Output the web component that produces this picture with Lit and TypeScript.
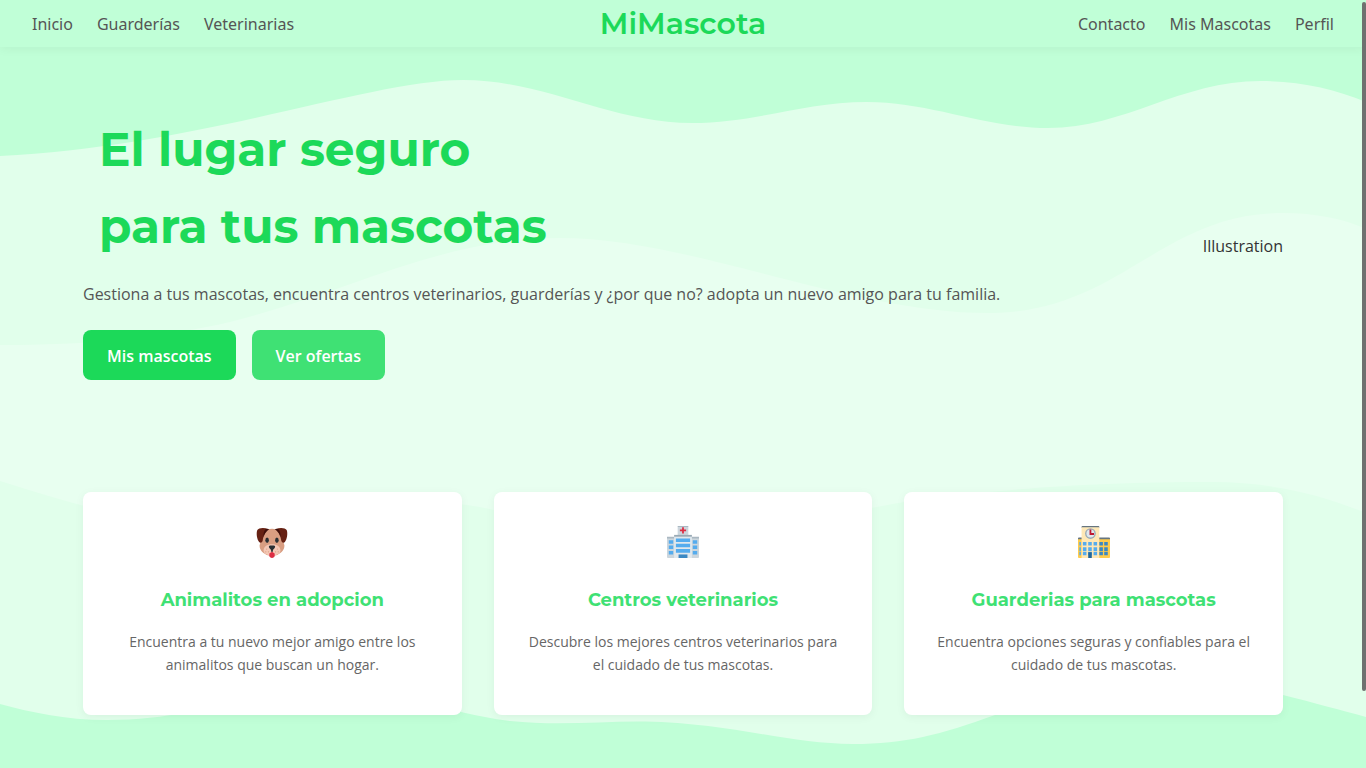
import { LitElement, html, css, svg } from "lit";
import { customElement } from "lit/decorators.js";

const dogIcon = svg`
  <path fill="#d99e82" d="M18 3c7 0 11 4 11.500 10l2.500 9c0 6-5 9-8 10.500L18 34l-6-1.500C9 31 4 28 4 22l2.500-9C7 7 11 3 18 3z"/>
  <path fill="#662113" d="M14 3.500C9 1.500 3 2 1.500 4.500 0 8 1 15 3.500 18c1.500 1.500 3.500.5 4-1.500C8.500 11.500 9.500 7 14 3.500zM22 3.500c5-2 11-1.500 12.500 1C36 8 35 15 32.500 18c-1.500 1.500-3.500.5-4-1.500C27.500 11.500 26.500 7 22 3.500z"/>
  <path fill="#3f0f0a" d="M11 3.500l4 0C11 6.500 9.500 9 8.500 13 8 9 9 5.500 11 3.500zM25 3.500l-4 0c4 3 5.500 5.500 6.500 9.500.5-4-.5-7.500-2.500-9.500z"/>
  <ellipse cx="12.500" cy="16" rx="2" ry="3" fill="#292f33"/>
  <ellipse cx="23.500" cy="16" rx="2" ry="3" fill="#292f33"/>
  <path fill="#f4c7b5" d="M18 20.500c6 0 9.500 3 9.500 7 0 3.500-4 5.500-9.500 5.500s-9.500-2-9.500-5.500c0-4 3.500-7 9.500-7z"/>
  <g fill="#d99e82"><circle cx="12" cy="26" r=".7"/><circle cx="14" cy="29" r=".7"/><circle cx="11" cy="29" r=".7"/><circle cx="24" cy="26" r=".7"/><circle cx="22" cy="29" r=".7"/><circle cx="25" cy="29" r=".7"/></g>
  <path fill="#dd2e44" d="M15 31l3-2 3 2v2.500C21 35 19.500 36 18 36s-3-1-3-2.500z"/>
  <path fill="#292f33" d="M16 22h4c1.500 0 2 1.500 1 2.700L19 27v1.500c0 1-2 1-2 0V27l-2-2.300c-1-1.200-.5-2.700 1-2.700z"/>`;

const sideWindows = [16, 22, 28];
const hospitalIcon = svg`
  <path fill="#ccd6dd" d="M0 13h36v22a1 1 0 0 1-1 1H1a1 1 0 0 1-1-1zM12 1h12v11H12z"/>
  <path fill="#aab8c2" d="M0 12h9v2H0zM27 12h9v2h-9zM12 0h12v1H12z"/>
  <path fill="#e1e8ed" d="M8 11h20v25H8z"/>
  <path fill="#99aab5" d="M8 10h20v2H8z"/>
  <path fill="#dd2e44" d="M17 1.500h2V4h2.500v2H19v2.500h-2V6h-2.500V4H17z"/>
  ${sideWindows.map((y) => svg`<path fill="#55acee" d="M2 ${y}h5v4H2zM29 ${y}h5v4h-5zM10 ${y - 2}h16v4H10z"/>`)}
  <path fill="#3b88c3" d="M13 32h10v4H13z"/>`;

const schoolRows = [18, 24, 29];
const schoolIcon = svg`
  <path fill="#ffcc4d" d="M0 14h36v21a1 1 0 0 1-1 1H1a1 1 0 0 1-1-1z"/>
  <path fill="#66757f" d="M0 14a1 1 0 0 1 1-1h34a1 1 0 0 1 1 1v1H0zM4 1a1 1 0 0 1 1-1h18a1 1 0 0 1 1 1v1H4z"/>
  <path fill="#ffe8b6" d="M4 1.500h20V36H4z"/>
  <circle cx="14" cy="8.500" r="6" fill="#99aab5"/>
  <circle cx="14" cy="8.500" r="4.500" fill="#e1e8ed"/>
  <path fill="#be1931" d="M13 4h2v4h3v2h-5z"/>
  ${schoolRows.map((y) => svg`
    <path fill="#55acee" d="M5.500 ${y}h4v4h-4zM11.500 ${y}h4v4h-4zM17.500 ${y}h4v4h-4zM1.500 ${y}h1.800v4H1.500z"/>
    <path fill="#3b88c3" d="M24 ${y}h4v4h-4zM29.500 ${y}h4v4h-4z"/>`)}
  <path fill="#226699" d="M11.500 29.500h4V36h-4z"/>`;

const cards = [
  { icon: dogIcon, title: "Animalitos en adopcion", text: "Encuentra a tu nuevo mejor amigo entre los animalitos que buscan un hogar." },
  { icon: hospitalIcon, title: "Centros veterinarios", text: "Descubre los mejores centros veterinarios para el cuidado de tus mascotas." },
  { icon: schoolIcon, title: "Guarderias para mascotas", text: "Encuentra opciones seguras y confiables para el cuidado de tus mascotas." },
];

@customElement("app-root")
export class AppRoot extends LitElement {
  static styles = css`
    :host {
      display: block;
      position: relative;
      min-height: 100vh;
      overflow: hidden;
      color: #333;
      background: #c0ffd7;
      font: 16px/26px "Open Sans", sans-serif;
    }
    * { box-sizing: border-box; }
    .waves { position: absolute; inset: 0; width: 100%; height: 100%; }
    .nav {
      position: relative;
      display: grid;
      grid-template-columns: 1fr auto 1fr;
      align-items: center;
      padding: 0 32px;
      background: #c0ffd7;
      box-shadow: 0 2px 10px rgba(0, 0, 0, 0.05);
    }
    .links { display: flex; gap: 24px; }
    .links.end { justify-content: flex-end; }
    .link { color: #555; text-decoration: none; font-family: Tahoma, "Noto Sans", sans-serif; }
    .logo {
      color: #1cd959;
      text-decoration: none;
      font: 600 30px/47px Montserrat, "Open Sans", sans-serif;
    }
    .content { position: relative; max-width: 1200px; margin: 0 auto; }
    .hero { display: flex; align-items: center; justify-content: space-between; padding: 64px 0; }
    .title {
      margin: 0 0 16px 16px;
      color: #1cd959;
      font: 700 47px/77px Montserrat, "Open Sans", sans-serif;
    }
    .lead { margin: 0 0 23px; color: #555; }
    .actions { display: flex; gap: 16px; }
    .button {
      height: 50px;
      padding: 2px 24px 0;
      border: 0;
      border-radius: 8px;
      color: #fff;
      background: #1cd959;
      font: 600 16px/26px "Open Sans", sans-serif;
    }
    .button.alt { background: #3fe174; }
    .cards { display: grid; grid-template-columns: repeat(3, 1fr); gap: 32px; padding: 48px 0 53px; }
    .card {
      padding: 34px 28px 39px;
      border-radius: 8px;
      background: #fff;
      text-align: center;
      box-shadow: 0 2px 10px rgba(0, 0, 0, 0.05);
    }
    .icon { display: block; width: 32px; height: 32px; margin: 0 auto 27px; }
    .card-title {
      margin: 0 0 14px;
      color: #3fe174;
      font: 700 18px/31px Montserrat, "Open Sans", sans-serif;
    }
    .card-text { margin: 0; color: #666; font-size: 14px; line-height: 23px; }
    .thumb {
      position: absolute;
      top: 2px;
      right: 0;
      width: 4px;
      height: calc(90% - 2px);
      border-radius: 2px;
      background: #6e716f;
    }
  `;

  render() {
    return html`
      <svg class="waves" viewBox="0 0 1366 768" preserveAspectRatio="none" aria-hidden="true">
        <path fill="#e1ffeb" d="M0 156C200 146 370 80 463 80C545 80 610 123 692 123C755 123 805 102 867 102C930 102 985 128 1048 128C1125 128 1180 81 1261 81C1300 81 1335 89 1366 102V717C1340 710 1315 703 1283 695C1180 665 1090 680 995 715C940 735 905 744 853 744C790 744 730 723 645 721.500C600 721 560 726 510 721C440 712 400 690 330 690C250 690 200 720 107 720C65 720 30 712 0 704Z"/>
        <path fill="#e8fff0" d="M0 345C90 345 160 338 230 322C350 292 440 238 560 238C690 238 850 313 988 313C1120 313 1160 213 1283 213C1315 213 1345 219 1366 229V513C1320 494 1270 482 1213 482C1090 482 1000 489 904 502C850 512 760 530 690 530C610 530 550 523 494 510C400 488 330 525 210 525C140 525 60 500 0 481Z"/>
      </svg>
      <nav class="nav">
        <div class="links">
          <a class="link" href="#">Inicio</a>
          <a class="link" href="#">Guarderías</a>
          <a class="link" href="#">Veterinarias</a>
        </div>
        <a class="logo" href="#">MiMascota</a>
        <div class="links end">
          <a class="link" href="#">Contacto</a>
          <a class="link" href="#">Mis Mascotas</a>
          <a class="link" href="#">Perfil</a>
        </div>
      </nav>
      <main class="content">
        <section class="hero">
          <div>
            <h1 class="title">El lugar seguro<br />para tus mascotas</h1>
            <p class="lead">Gestiona a tus mascotas, encuentra centros veterinarios, guarderías y ¿por que no? adopta un nuevo amigo para tu familia.</p>
            <div class="actions">
              <button class="button">Mis mascotas</button>
              <button class="button alt">Ver ofertas</button>
            </div>
          </div>
          <div>Illustration</div>
        </section>
        <section class="cards">
          ${cards.map((card) => html`
            <article class="card">
              <svg class="icon" viewBox="0 0 36 36" aria-hidden="true">${card.icon}</svg>
              <h3 class="card-title">${card.title}</h3>
              <p class="card-text">${card.text}</p>
            </article>`)}
        </section>
      </main>
      <div class="thumb"></div>
    `;
  }
}
